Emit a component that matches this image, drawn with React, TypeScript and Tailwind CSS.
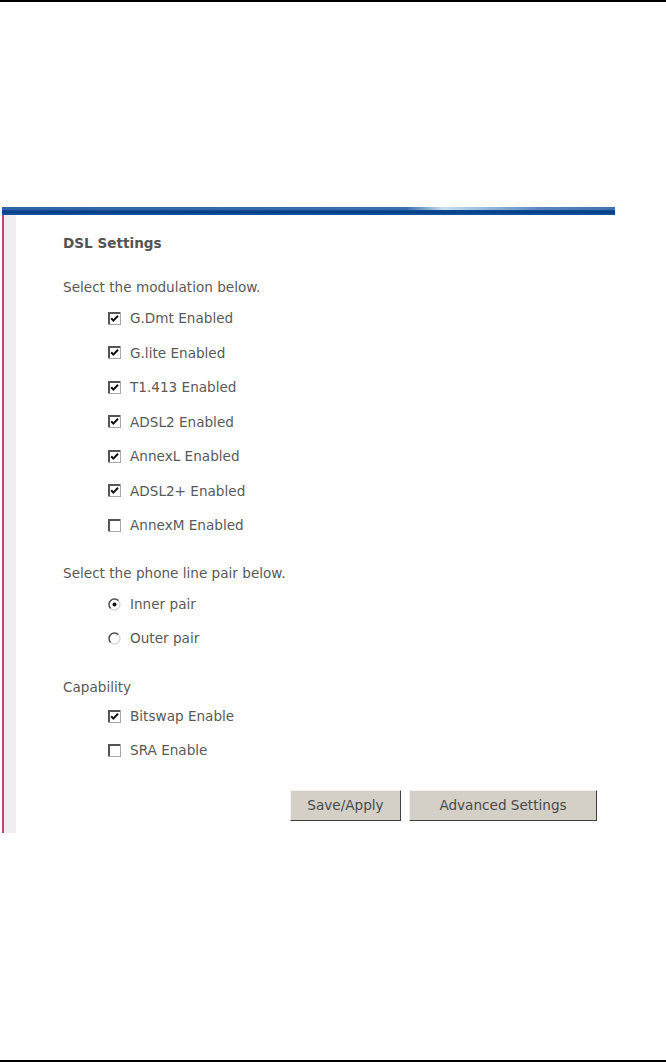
import React from 'react'

const font = { fontFamily: '"DejaVu Sans", Verdana, sans-serif' }

function Check({ on }: { on: boolean }) {
  return (
    <svg width="13" height="13" viewBox="0 0 13 13" className="shrink-0">
      <rect x="0.5" y="0.5" width="12" height="12" fill="#fff" stroke="#a8a8a8" />
      <path d="M1 12V1H12" fill="none" stroke="#555" strokeWidth="2" />
      {on && <path d="M3.2 6.2 L5.4 8.6 L10 3.8" fill="none" stroke="#111" strokeWidth="2" />}
    </svg>
  )
}

function Radio({ on }: { on: boolean }) {
  return (
    <svg width="13" height="13" viewBox="0 0 13 13" className="shrink-0">
      <circle cx="6.5" cy="6.5" r="5.5" fill="#fff" stroke="#c4c4c4" />
      <path d="M2.6 10.4 A5.5 5.5 0 0 1 10.4 2.6" fill="none" stroke="#555" strokeWidth="1.5" />
      {on && <circle cx="6.5" cy="6.5" r="2" fill="#111" />}
    </svg>
  )
}

function Row({ children, label, h = 'h-[34.5px]' }: { children: React.ReactNode; label: string; h?: string }) {
  return (
    <div className={`${h} flex items-center gap-[9px] pl-[45px]`}>
      {children}
      <span>{label}</span>
    </div>
  )
}

export default function App() {
  const modulations: [string, boolean][] = [
    ['G.Dmt Enabled', true],
    ['G.lite Enabled', true],
    ['T1.413 Enabled', true],
    ['ADSL2 Enabled', true],
    ['AnnexL Enabled', true],
    ['ADSL2+ Enabled', true],
    ['AnnexM Enabled', false],
  ]

  return (
    <div className="w-[666px] h-[1062px] bg-white flex flex-col text-[13.6px] text-[#5a5a5a]" style={font}>
      <div className="h-[2px] bg-black" />
      <div className="h-[205px]" />

      {/* blue header bar */}
      <div className="ml-[2px] w-[613px] h-[8px] flex flex-col">
        <div className="h-[3px] bg-[linear-gradient(90deg,#2f64a6_0%,#3b6fae_66%,#c6def0_72%,#9cbfdf_78%,#5a86bf_88%,#4071b0_100%)]" />
        <div className="h-[5px] bg-[linear-gradient(180deg,#0d4c97_0%,#033f86_50%,#1c5aa3_100%)]" />
      </div>

      {/* panel */}
      <div className="ml-[2px] w-[613px] flex">
        <div className="w-[2px] bg-[#c24a72]" />
        <div className="w-[12px] bg-[#efeff3]" />
        <div className="flex-1 flex flex-col pl-[47px] pr-[18px] pt-[18px] pb-[12px]">
          <div className="h-[20px] flex items-center font-bold text-[#555]">DSL Settings</div>
          <div className="h-[20px] mt-[24px] flex items-center">Select the modulation below.</div>
          <div className="mt-[4px]">
            {modulations.map(([label, on]) => (
              <Row key={label} label={label}>
                <Check on={on} />
              </Row>
            ))}
          </div>
          <div className="h-[20px] mt-[21px] flex items-center">Select the phone line pair below.</div>
          <div className="mt-[4px]">
            <Row label="Inner pair" h="h-[34px]">
              <Radio on />
            </Row>
            <Row label="Outer pair" h="h-[34px]">
              <Radio on={false} />
            </Row>
          </div>
          <div className="h-[20px] mt-[22px] flex items-center">Capability</div>
          <div className="mt-[2px]">
            <Row label="Bitswap Enable" h="h-[34px]">
              <Check on />
            </Row>
            <Row label="SRA Enable" h="h-[34px]">
              <Check on={false} />
            </Row>
          </div>
          <div className="mt-[22px] flex justify-end gap-[8px]">
            <button className="w-[111px] h-[31px] bg-[#d4d0c8] border border-t-[#f4f3ef] border-l-[#f4f3ef] border-b-[#404040] border-r-[#404040] text-[#4a4a4a] text-[13.6px]" style={font}>
              Save/Apply
            </button>
            <button className="w-[188px] h-[31px] bg-[#d4d0c8] border border-t-[#f4f3ef] border-l-[#f4f3ef] border-b-[#404040] border-r-[#404040] text-[#4a4a4a] text-[13.6px]" style={font}>
              Advanced Settings
            </button>
          </div>
        </div>
      </div>

      <div className="flex-1" />
      <div className="h-[2px] bg-black" />
    </div>
  )
}
